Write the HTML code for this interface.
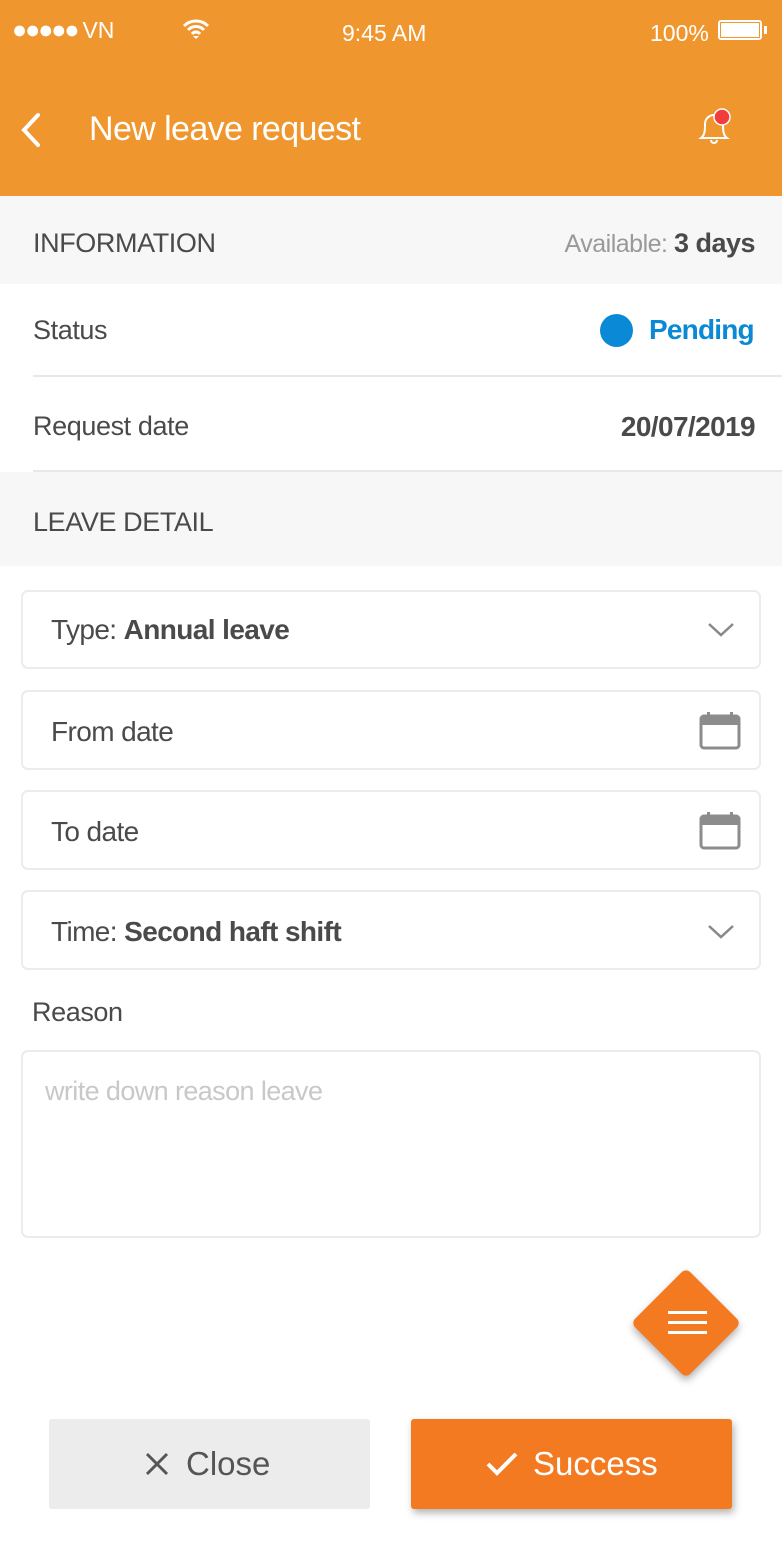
<!DOCTYPE html>
<html><head><meta charset="utf-8"><style>
*{margin:0;padding:0;box-sizing:border-box}
body{width:782px;height:1564px;background:#fff;font-family:"Liberation Sans",sans-serif;position:relative;overflow:hidden;color:#444}
.abs{position:absolute}
.hdr{left:0;top:0;width:782px;height:196px;background:#F0962E;color:#fff}
.sec{left:0;width:782px;background:#f7f7f7}
.t{font-size:27px;color:#4a4a4a;letter-spacing:-0.4px}
.box{left:21px;width:740px;border:2px solid #ececec;border-radius:7px;background:#fff}
.box span{position:absolute;left:28px;font-size:28px;color:#4a4a4a;letter-spacing:-0.6px}
.line{height:2px;background:#e8e8e8;left:33px;width:749px}
</style></head><body>
<div class="abs hdr">
 <div class="abs" style="left:12px;top:16px;font-size:25px;letter-spacing:-2px">●●●●● <span style="letter-spacing:0;font-size:23px">VN</span></div>
 <svg class="abs" style="left:182px;top:18px" width="28" height="22" viewBox="0 0 28 22"><path d="M2 8a17 17 0 0 1 24 0M6 12a11 11 0 0 1 16 0M10 16a5 5 0 0 1 8 0" stroke="#fff" stroke-width="3" fill="none"/><path d="M11 18l3 3 3-3z" fill="#fff"/></svg>
 <div class="abs" style="left:342px;top:20px;font-size:23px">9:45 AM</div>
 <div class="abs" style="left:650px;top:20px;font-size:23px">100%</div>
 <div class="abs" style="left:718px;top:20px;width:44px;height:20px;border:2px solid #fff;border-radius:3px;padding:1px"><div style="background:#fff;width:100%;height:100%"></div></div>
 <div class="abs" style="left:764px;top:26px;width:3px;height:8px;background:#fff"></div>
 <svg class="abs" style="left:16px;top:112px" width="30" height="36" viewBox="0 0 30 36"><path d="M22 3L8 18l14 15" stroke="#fff" stroke-width="4" fill="none" stroke-linecap="round"/></svg>
 <div class="abs" style="left:89px;top:110px;font-size:34px;letter-spacing:-0.6px">New leave request</div>
 <svg class="abs" style="left:692px;top:104px" width="46" height="46" viewBox="0 0 46 46"><path d="M9 34c4-3 4-8 4-14a9 9 0 0 1 18 0c0 6 0 11 4 14z" stroke="#fff" stroke-width="2" fill="none"/><path d="M19 36a3 3 0 0 0 6 0" stroke="#fff" stroke-width="2" fill="none"/><circle cx="30" cy="13" r="8" fill="#f33c3c" stroke="#fff" stroke-width="1.5"/></svg>
</div>
<div class="abs sec" style="top:196px;height:88px"></div>
<div class="abs t" style="left:33px;top:228px">INFORMATION</div>
<div class="abs" style="right:27px;top:228px;font-size:25px;color:#999;letter-spacing:-0.5px">Available: <b style="color:#4a4a4a;font-size:27px">3 days</b></div>
<div class="abs t" style="left:33px;top:315px">Status</div>
<div class="abs" style="left:600px;top:314px;width:33px;height:33px;border-radius:50%;background:#0a8ad6"></div>
<div class="abs" style="left:649px;top:314px;font-size:28px;font-weight:bold;color:#0a8ad6;letter-spacing:-0.8px">Pending</div>
<div class="abs line" style="top:375px"></div>
<div class="abs t" style="left:33px;top:411px">Request date</div>
<div class="abs" style="right:27px;top:411px;font-size:28px;font-weight:bold;color:#4a4a4a;letter-spacing:-0.6px">20/07/2019</div>
<div class="abs line" style="top:470px"></div>
<div class="abs sec" style="top:472px;height:94px"></div>
<div class="abs t" style="left:33px;top:507px">LEAVE DETAIL</div>

<div class="abs box" style="top:590px;height:79px"><span style="top:22px">Type: <b>Annual leave</b></span>
<svg class="abs" style="left:684px;top:30px" width="28" height="16" viewBox="0 0 28 16"><path d="M2 2l12 11L26 2" stroke="#888" stroke-width="2.5" fill="none"/></svg></div>
<div class="abs box" style="top:690px;height:80px"><span style="top:24px">From date</span>
<svg class="abs" style="left:676px;top:20px" width="42" height="38" viewBox="0 0 42 38"><rect x="2" y="4" width="38" height="32" rx="3" fill="none" stroke="#8c8c8c" stroke-width="3"/><rect x="2" y="4" width="38" height="9" fill="#8c8c8c"/><rect x="8" y="0" width="3" height="6" fill="#8c8c8c"/><rect x="31" y="0" width="3" height="6" fill="#8c8c8c"/></svg></div>
<div class="abs box" style="top:790px;height:80px"><span style="top:24px">To date</span>
<svg class="abs" style="left:676px;top:20px" width="42" height="38" viewBox="0 0 42 38"><rect x="2" y="4" width="38" height="32" rx="3" fill="none" stroke="#8c8c8c" stroke-width="3"/><rect x="2" y="4" width="38" height="9" fill="#8c8c8c"/><rect x="8" y="0" width="3" height="6" fill="#8c8c8c"/><rect x="31" y="0" width="3" height="6" fill="#8c8c8c"/></svg></div>
<div class="abs box" style="top:890px;height:80px"><span style="top:24px">Time: <b>Second haft shift</b></span>
<svg class="abs" style="left:684px;top:32px" width="28" height="16" viewBox="0 0 28 16"><path d="M2 2l12 11L26 2" stroke="#888" stroke-width="2.5" fill="none"/></svg></div>
<div class="abs t" style="left:32px;top:997px">Reason</div>
<div class="abs box" style="top:1050px;height:188px"><span style="left:22px;top:24px;font-size:27px;color:#c8c8c8">write down reason leave</span></div>

<div class="abs" style="left:647px;top:1284px;width:78px;height:78px;background:#F47A22;border-radius:6px;transform:rotate(45deg);box-shadow:3px 3px 8px rgba(0,0,0,.3)"></div>
<div class="abs" style="left:668px;top:1311px;width:39px;height:3px;background:#fff"></div>
<div class="abs" style="left:668px;top:1321px;width:39px;height:3px;background:#fff"></div>
<div class="abs" style="left:668px;top:1331px;width:39px;height:3px;background:#fff"></div>

<div class="abs" style="left:49px;top:1419px;width:321px;height:90px;background:#ececec;border-radius:3px"></div>
<svg class="abs" style="left:145px;top:1452px" width="24" height="24" viewBox="0 0 24 24"><path d="M2 2l20 20M22 2L2 22" stroke="#555" stroke-width="3"/></svg>
<div class="abs" style="left:186px;top:1445px;font-size:33px;color:#555">Close</div>
<div class="abs" style="left:411px;top:1419px;width:321px;height:90px;background:#F47A22;border-radius:3px;box-shadow:2px 4px 8px rgba(0,0,0,.3)"></div>
<svg class="abs" style="left:486px;top:1451px" width="32" height="26" viewBox="0 0 32 26"><path d="M2 13l9 9L30 3" stroke="#fff" stroke-width="4" fill="none"/></svg>
<div class="abs" style="left:533px;top:1445px;font-size:33px;color:#fff">Success</div>
</body></html>
